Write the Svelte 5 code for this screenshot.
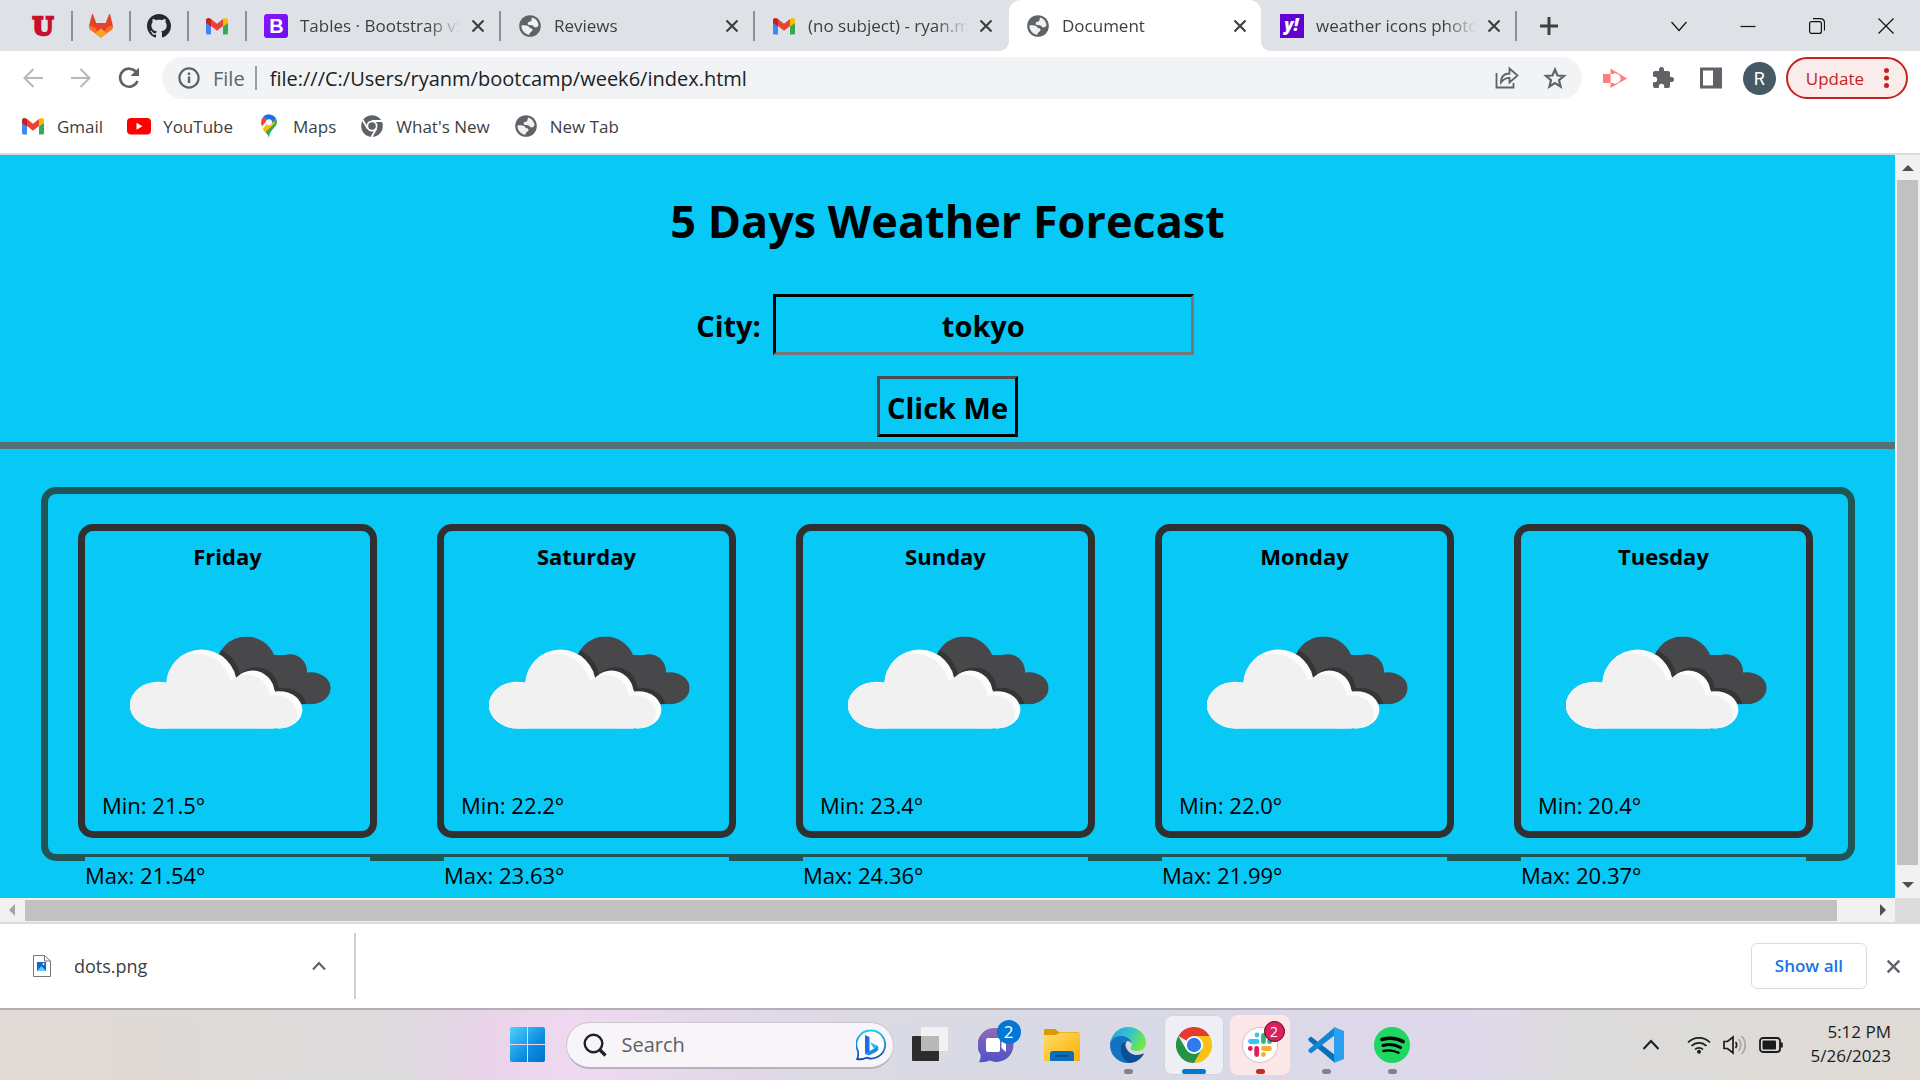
<script>
  const pinned = [
    { name: 'University of Utah', icon: 'utah' },
    { name: 'GitLab', icon: 'gitlab' },
    { name: 'GitHub', icon: 'github' },
    { name: 'Gmail', icon: 'gmail' }
  ];
  const tabs = [
    { title: 'Tables · Bootstrap v5', icon: 'bootstrap', line: true },
    { title: 'Reviews', icon: 'globe', line: true },
    { title: '(no subject) - ryan.m', icon: 'gmail', line: false },
    { title: 'Document', icon: 'globe', line: false, active: true },
    { title: 'weather icons photo', icon: 'yahoo', line: true }
  ];
  const bookmarks = [
    { title: 'Gmail', icon: 'gmail' },
    { title: 'YouTube', icon: 'youtube' },
    { title: 'Maps', icon: 'maps' },
    { title: "What's New", icon: 'chromegrey' },
    { title: 'New Tab', icon: 'globe' }
  ];
  const days = [
    { name: 'Friday', min: '21.5', max: '21.54' },
    { name: 'Saturday', min: '22.2', max: '23.63' },
    { name: 'Sunday', min: '23.4', max: '24.36' },
    { name: 'Monday', min: '22.0', max: '21.99' },
    { name: 'Tuesday', min: '20.4', max: '20.37' }
  ];
  let city = $state('tokyo');
  let url = $state('file:///C:/Users/ryanm/bootcamp/week6/index.html');
</script>

{#snippet icon(name)}
  {#if name === 'utah'}
    <svg class="i24" viewBox="0 0 24 24"><text x="12" y="20.500" text-anchor="middle" font-family="DejaVu Serif, serif" font-weight="bold" font-size="24" fill="#c8102e" stroke="#c8102e" stroke-width="2.400">U</text></svg>
  {:else if name === 'gitlab'}
    <svg class="i24" viewBox="0 0 24 24"><path fill="#e24329" d="M4 .5 7.300 9h9.400L20 .5c.3-.6.9-.5 1.100 0L24 12 12 23.500 0 12 2.900.5c.2-.5.9-.6 1.100 0z"/><path fill="#fc6d26" d="M0 12c2-.6 4.500.5 6.500 2L12 23.700 1.500 16C.3 15 0 13.500 0 12zM24 12c-2-.6-4.500.5-6.500 2L12 23.700 22.500 16c1.200-1 1.500-2.500 1.500-4z"/><path fill="#fca326" d="m6.500 19 5.500-4.500 5.500 4.500L12 23.800z"/></svg>
  {:else if name === 'github'}
    <svg class="i24" viewBox="0 0 16 16"><path fill="#24292f" d="M8 0C3.580 0 0 3.580 0 8c0 3.540 2.290 6.530 5.470 7.590.4.070.55-.17.55-.38 0-.19-.01-.82-.01-1.490-2.010.37-2.530-.49-2.690-.94-.09-.23-.48-.94-.82-1.130-.28-.15-.68-.52-.01-.53.63-.01 1.080.58 1.230.82.72 1.210 1.870.87 2.330.66.07-.52.28-.87.51-1.070-1.780-.2-3.640-.89-3.640-3.950 0-.87.31-1.590.82-2.150-.08-.2-.36-1.020.08-2.120 0 0 .67-.21 2.200.82.64-.18 1.320-.27 2-.27s1.360.09 2 .27c1.530-1.040 2.200-.82 2.200-.82.44 1.100.16 1.920.08 2.120.51.56.82 1.270.82 2.150 0 3.070-1.870 3.750-3.650 3.950.29.25.54.73.54 1.480 0 1.070-.01 1.930-.01 2.200 0 .21.15.46.55.38A8.010 8.010 0 0 0 16 8c0-4.420-3.580-8-8-8z"/></svg>
  {:else if name === 'gmail'}
    <svg class="i24" viewBox="0 0 24 24"><path fill="#4285f4" d="M1 8.500V19a1.500 1.500 0 0 0 1.500 1.500H6V11z"/><path fill="#34a853" d="M23 8.500V19a1.500 1.500 0 0 1-1.500 1.500H18V11z"/><path fill="#ea4335" d="M6 5v7l6 4.700 6-4.700V5l-6 4.700z"/><path fill="#c5221f" d="M1 6v3l5 3.500V5C4 3.400 1 3.800 1 6z"/><path fill="#fbbc04" d="M23 6v3l-5 3.500V5c2-1.600 5-1.200 5 1z"/></svg>
  {:else if name === 'bootstrap'}
    <svg class="i24" viewBox="0 0 24 24"><defs><linearGradient id="bs" x1="0" x2="1" y2="1"><stop stop-color="#9013fe"/><stop offset="1" stop-color="#6610f2"/></linearGradient></defs><rect width="24" height="24" rx="3" fill="url(#bs)"/><text x="12.500" y="19" text-anchor="middle" font-family="Liberation Sans, sans-serif" font-weight="bold" font-size="20" fill="#fff">B</text></svg>
  {:else if name === 'yahoo'}
    <svg class="i24" viewBox="0 0 24 24"><rect width="24" height="24" fill="#6001d2"/><text x="11.500" y="17" text-anchor="middle" font-family="Open Sans, sans-serif" font-weight="800" font-style="italic" font-size="17" fill="#fff">y!</text></svg>
  {:else if name === 'globe'}
    <svg class="i24" viewBox="0 0 24 24"><circle cx="12" cy="12" r="10.800" fill="#5f6368"/><path fill="#fff" fill-opacity=".9" d="M3.400 11.500c2.600-.6 5-.4 6.600.4 1.200.6 1.400 2.100 2.900 2.300 1.300.2 1.900 1 1.500 2.300-.4 1.200-2 1.400-2.500 2.500-.3.700-.5 1.200-.6 1.700C7 20.300 3.300 16.500 3.400 11.500z"/><path fill="#fff" fill-opacity=".9" d="M14 3.600c3.500.9 6.300 4 6.500 7.700-.7 1.500-1.700 2.200-3 2.200-1.600 0-1.700-1.500-3-2-1.500-.5-3.500.2-4.500-1-.8-1.100 0-2.600 1.500-2.800 1.200-.2 1.800-.3 2-1.600.1-.9.300-1.700.5-2.500z"/></svg>
  {:else if name === 'youtube'}
    <svg class="i24" viewBox="0 0 24 24"><rect y="4" width="24" height="16.500" rx="4" fill="#f00"/><path fill="#fff" d="m9.500 8.800 6 3.500-6 3.400z"/></svg>
  {:else if name === 'maps'}
    <svg class="i24" viewBox="0 0 24 24"><path fill="#34a853" d="M12 24c0-3 1-5.500 3.500-8.500S20 11 20 8.300A8 8 0 0 0 19 4.500L6.500 16c2.500 2.500 4.500 5 5.500 8z"/><path fill="#fbbc04" d="M5.700 14.900 15 4l3 5-9.500 9.200z"/><path fill="#ea4335" d="M4.200 7.500A8 8 0 0 1 6 3l4 3.300-5 6.200C4.300 11 4 9.500 4.200 7.500z"/><path fill="#1a73e8" d="M6 3a8 8 0 0 1 13 1.500L14 10 10 6.300z"/><circle cx="12" cy="8.200" r="3" fill="#fff"/></svg>
  {:else if name === 'chromegrey'}
    <svg class="i24" viewBox="0 0 24 24"><circle cx="12" cy="12" r="10.800" fill="#5f6368"/><circle cx="12" cy="12" r="5.500" fill="#fff"/><circle cx="12" cy="12" r="3.800" fill="#5f6368"/><path d="M12 7h10M7.600 14.500 2.700 6M16.400 14.500 11.500 23" stroke="#fff" stroke-width="1.800"/></svg>
  {/if}
{/snippet}

{#snippet cross(size)}
  <svg width={size} height={size} viewBox="0 0 14 14"><path d="M1.500 1.500l11 11M12.500 1.500l-11 11" stroke="currentColor" stroke-width="2.200" fill="none"/></svg>
{/snippet}

<div class="screen">
  <header class="browser">
    <div class="tabstrip">
      <nav class="pins" aria-label="Pinned tabs">
        {#each pinned as p}
          <button class="pin" aria-label={p.name}>{@render icon(p.icon)}</button><span class="line"></span>
        {/each}
      </nav>
      {#each tabs as t}
        <div class="tab" class:active={t.active}>
          {@render icon(t.icon)}
          <span class="title">{t.title}</span>
          <button class="close" aria-label="Close tab">{@render cross(14)}</button>
        </div>
        <span class="line" class:hidden={!t.line}></span>
      {/each}
      <button class="plus" aria-label="New tab"><svg width="18" height="18" viewBox="0 0 18 18"><path d="M9 0v18M0 9h18" stroke="#3c4043" stroke-width="3"/></svg></button>
      <div class="controls">
        <button aria-label="Search tabs"><svg width="16" height="16" viewBox="0 0 16 16"><path d="M.5 4 8 12.500 15.500 4"/></svg></button>
        <button aria-label="Minimize"><svg width="16" height="16" viewBox="0 0 16 16"><path d="M.5 8.500h15"/></svg></button>
        <button aria-label="Restore"><svg width="16" height="16" viewBox="0 0 16 16"><rect x=".6" y="3.600" width="11.800" height="11.800" rx="2"/><path d="M4 .6h7.500a4 4 0 0 1 4 4v8"/></svg></button>
        <button aria-label="Close window"><svg width="16" height="16" viewBox="0 0 16 16"><path d="M.5.5l15 15M15.500.5l-15 15"/></svg></button>
      </div>
    </div>

    <div class="toolbar">
      <button class="nav dim" aria-label="Back"><svg width="20" height="20" viewBox="0 0 20 20"><path d="M20 10H1.500M10.500 1l-9 9 9 9"/></svg></button>
      <button class="nav dim" aria-label="Forward"><svg width="20" height="20" viewBox="0 0 20 20"><path d="M0 10h18.500M9.500 1l9 9-9 9"/></svg></button>
      <button class="nav" aria-label="Reload"><svg width="22" height="22" viewBox="0 0 22 22"><path stroke-width="2.600" d="M19.500 14a9 9 0 1 1-1-8.500"/><path d="M21 .5V9h-8.500z" fill="#5f6368" stroke="none"/></svg></button>
      <div class="omnibox">
        <svg width="22" height="22" viewBox="0 0 22 22"><circle cx="11" cy="11" r="9.600" fill="none" stroke="#5f6368" stroke-width="2.200"/><path d="M11 9.500V16M11 5.500V8" stroke="#5f6368" stroke-width="2.400"/></svg>
        <span class="scheme">File</span>
        <span class="divide"></span>
        <input class="url" aria-label="Address" bind:value={url} spellcheck="false" />
        <button class="nav" aria-label="Share"><svg width="24" height="24" viewBox="0 0 24 24"><path stroke-width="1.800" d="M1.500 7v14.500h17V17M6 16.500C6 10 9 7.500 14.500 7.500V2.500l8 7-8 7v-4.700C10.500 11.800 8.500 13 6 16.500z"/></svg></button>
        <button class="nav" aria-label="Bookmark"><svg width="24" height="24" viewBox="0 0 24 24"><path stroke-width="2.200" d="m12 3.500 2.500 6 6.500.5-5 4.200 1.600 6.300L12 17l-5.600 3.500L8 14.200 3 10l6.500-.5z"/></svg></button>
      </div>
      <div class="extensions">
        <button class="nav" aria-label="Screen recorder"><svg width="24" height="24" viewBox="0 0 24 24"><path fill="#ff7d7d" stroke="none" d="M0 8h7.500v9H0zM7.500 2.500 24 12.500 7.500 22v-5h3l1 1 4-1.500 2-2.500v-3l-2-2.500-4-1.500-1 1h-3z"/><path fill="#fff" stroke="none" d="M9 9.500 13.500 8v2h3v5h-3v2L9 15.500z"/></svg></button>
        <button class="nav" aria-label="Extensions"><svg width="24" height="24" viewBox="0 0 24 24"><path fill="#5f6368" stroke="none" d="M20.500 11H19V7a2 2 0 0 0-2-2h-4V3.500a2.500 2.500 0 0 0-5 0V5H4a2 2 0 0 0-2 2v3.800h1.500a2.700 2.700 0 0 1 0 5.400H2V20a2 2 0 0 0 2 2h3.800v-1.500a2.700 2.700 0 0 1 5.400 0V22H17a2 2 0 0 0 2-2v-4h1.500a2.500 2.500 0 0 0 0-5z"/></svg></button>
        <button class="nav" aria-label="Side panel"><svg width="24" height="24" viewBox="0 0 24 24"><path fill="#5f6368" stroke="none" fill-rule="evenodd" d="M1 1.500h22v21H1zM4 4.500v15h10v-15z"/></svg></button>
        <button class="avatar" aria-label="Profile">R</button>
      </div>
      <button class="update">Update<svg width="5" height="20" viewBox="0 0 5 20"><circle cx="2.500" cy="2.500" r="2.500"/><circle cx="2.500" cy="10" r="2.500"/><circle cx="2.500" cy="17.500" r="2.500"/></svg></button>
    </div>

    <nav class="bookmarks" aria-label="Bookmarks">
      {#each bookmarks as b}
        <a href="#top">{@render icon(b.icon)}{b.title}</a>
      {/each}
    </nav>
  </header>

  <div class="viewport">
    <main class="page">
      <h1>5 Days Weather Forecast</h1>
      <form onsubmit={(e) => e.preventDefault()}>
        <div class="field">
          <label for="city">City:</label>
          <input id="city" bind:value={city} />
        </div>
        <button class="go">Click Me</button>
      </form>
      <hr />
      <section class="forecast">
        {#each days as d}
          <div class="day">
            <article class="card">
              <h2>{d.name}</h2>
              <svg class="cloud" viewBox="282 496 622 284" role="img" aria-label="Broken clouds">
                <defs>
                  <g id="front"><circle cx="515" cy="645" r="106"/><ellipse cx="385" cy="706" rx="85" ry="70"/><circle cx="668" cy="668" r="66"/><ellipse cx="748" cy="720" rx="70" ry="56"/><path d="M385 660h350v116H385z"/></g>
                  <clipPath id="frontclip"><circle cx="515" cy="645" r="106"/><ellipse cx="385" cy="706" rx="85" ry="70"/><circle cx="668" cy="668" r="66"/><ellipse cx="748" cy="720" rx="70" ry="56"/><path d="M385 660h350v116H385z"/></clipPath>
                  <clipPath id="backclip"><circle cx="650" cy="590" r="90"/><circle cx="780" cy="605" r="52"/><ellipse cx="843" cy="655" rx="60" ry="48"/><path d="M600 600 700 555h80l60 60v88h-30z"/></clipPath>
                </defs>
                <g clip-path="url(#backclip)"><path fill="#48484a" d="M500 490h410v230H500z"/><use href="#front" x="12" y="-10" fill="#343537"/></g>
                <use href="#front" fill="#fcfcfd"/>
                <g clip-path="url(#frontclip)"><use href="#front" x="-16" y="12" fill="#f1f1f2"/><path d="M300 640h120v140H300zM385 740h370v40H385z" fill="#f1f1f2"/></g>
              </svg>
              <p>Min: {d.min}°</p>
            </article>
            <p class="max">Max: {d.max}°</p>
          </div>
        {/each}
      </section>
    </main>
    <div class="vbar"><svg width="12" height="6" viewBox="0 0 12 6"><path d="M6 0l6 6H0z" fill="#505050"/></svg><span></span><svg width="12" height="6" viewBox="0 0 12 6"><path d="M6 6l6-6H0z" fill="#505050"/></svg></div>
    <div class="hbar"><svg width="6" height="12" viewBox="0 0 6 12"><path d="M0 6l6-6v12z" fill="#a3a3a3"/></svg><span></span><svg width="6" height="12" viewBox="0 0 6 12"><path d="M6 6 0 0v12z" fill="#505050"/></svg></div>
    <div class="corner"></div>
  </div>

  <footer class="downloads">
    <button class="file">
      <svg width="18" height="22" viewBox="0 0 18 22"><path d="M.5.5h11l6 5.500v15.500H.5z" fill="#fff" stroke="#777"/><path d="M11.500.5V6h6" fill="none" stroke="#777"/><rect x="4" y="7" width="9" height="9" fill="#1565c9"/><path d="m4 16 4.500-5 4.500 5z" fill="#50d0f8"/><circle cx="10.500" cy="9" r="1" fill="#fff"/></svg>
      <span>dots.png</span>
      <svg width="14" height="10" viewBox="0 0 14 10"><path d="m1 8.500 6-6.500 6 6.500" fill="none" stroke="#5f6368" stroke-width="2.200"/></svg>
    </button>
    <button class="showall">Show all</button>
    <button class="shut" aria-label="Close downloads">{@render cross(15)}</button>
  </footer>

  <div class="taskbar">
    <div class="apps">
      <button class="win" aria-label="Start"><svg width="36" height="36" viewBox="0 0 36 36"><defs><linearGradient id="wn" x1="0" y1="0" x2="1" y2="1"><stop stop-color="#4fd0ff"/><stop offset=".6" stop-color="#0c8ee0"/><stop offset="1" stop-color="#0070cf"/></linearGradient></defs><path fill="url(#wn)" d="M2 0h15v17H0V2a2 2 0 0 1 2-2zM18 0h15a2 2 0 0 1 2 2v15H18zM0 18h17v17H2a2 2 0 0 1-2-2zM18 18h17v15a2 2 0 0 1-2 2H18z"/></svg></button>
      <label class="search">
        <svg width="24" height="24" viewBox="0 0 24 24"><circle cx="10.500" cy="10.500" r="8.800" fill="none" stroke="#222" stroke-width="2.400"/><path d="m17 17 5.500 5.500" stroke="#222" stroke-width="3.200"/></svg>
        <input type="text" aria-label="Search" placeholder="Search" />
        <svg width="30" height="32" viewBox="0 0 30 32"><defs><linearGradient id="bg" x2="0" y2="1"><stop stop-color="#1ccdf0"/><stop offset="1" stop-color="#1546b8"/></linearGradient></defs><path d="M15 1.500a14 14 0 1 1-4.500 27.200C8 30 4 30.500 1.200 30 2.300 28 2.500 26 2 22A14 14 0 0 1 15 1.500z" fill="#fff" stroke="url(#bg)" stroke-width="1.800"/><path fill="#1d6fe8" d="m9 6 4.500 2v14.500L9 25z"/><path fill="#22c4ee" d="m14 13 8 4v4.500L17 18.500z"/><path fill="#2286ee" d="m9 25 13-8c1 3 0 5-2 6l-7 3.500z"/></svg>
      </label>
      <button class="app" aria-label="Task view"><svg width="36" height="36" viewBox="0 0 36 36"><rect y="9" width="27" height="25" rx="1" fill="#2c2c2c"/><rect x="9" width="27" height="24" rx="1" fill="#f4f4f4" opacity=".9"/><rect x="9" y="9" width="18" height="15" fill="#b9b9b9"/></svg></button>
      <button class="app" aria-label="Chat">
        <svg width="36" height="36" viewBox="0 0 36 36"><defs><linearGradient id="ch" x2="0" y2="1"><stop stop-color="#8f6bb5"/><stop offset="1" stop-color="#4f52c8"/></linearGradient></defs><path fill="url(#ch)" d="M18 1a17 17 0 1 1-6.500 32.500C8 35 4 35.500 1 35c1-2 2-5 1.500-7.500A17 17 0 0 1 18 1z"/><rect x="8" y="11" width="14" height="14" rx="2" fill="#fff"/><path fill="#fff" d="m23.500 15 4.500-4v14l-4.500-4z"/></svg>
        <span class="badge">2</span>
      </button>
      <button class="app" aria-label="File Explorer"><svg width="36" height="36" viewBox="0 0 36 36"><defs><linearGradient id="fd" x2="1" y2="1"><stop stop-color="#ffdc6a"/><stop offset="1" stop-color="#f8b000"/></linearGradient></defs><path fill="#d99a07" d="M0 3.500A1.500 1.500 0 0 1 1.500 2H11l4 3h20v8H0z"/><path fill="url(#fd)" d="M0 8h12l4-2.500h18.500A1.500 1.500 0 0 1 36 7v27H0z"/><path fill="#0d6dbd" d="M6 34V27a3 3 0 0 1 3-3h18a3 3 0 0 1 3 3v7z"/><path d="M11 29h14" stroke="#084a85" stroke-width="1.500"/></svg></button>
      <button class="app" aria-label="Edge"><svg width="36" height="36" viewBox="0 0 36 36"><defs><linearGradient id="eg" x2="1" y2=".4"><stop stop-color="#1f9fe0"/><stop offset=".55" stop-color="#31c3cf"/><stop offset="1" stop-color="#6ee84a"/></linearGradient></defs><path fill="url(#eg)" d="M0 17C1 7 9 0 18 0c10 0 18 7 18 15.500 0 6-4.500 8.500-9 8.500-4 0-6.500-1.200-6.500-2.800 0-.8 1.500-1.700 1.500-4.200 0-4-5-6-10-6-6 0-10 3-12 6z"/><path fill="#1273c4" d="M0 18c0-5 5-9 10.500-9 5 0 11 2.500 11.500 8-1-2-3-3-5-3-5 0-7 5-6 10s5 10 10 12C9 37 0 29 0 18z"/><path fill="#0c4f96" d="M10.500 21c0-4 3-7 6.500-7-2 2-2 5-.5 7.500 2 4 6 6.500 10.500 6.500 3 0 5-1 6-1.500.5-.2 1 .3.700.8C31 32 26 36 19.500 36c-5-1.500-9-8-9-15z"/></svg><i class="run"></i></button>
      <button class="app on" aria-label="Chrome"><svg width="36" height="36" viewBox="0 0 36 36"><path fill="#e33b2e" d="M18 18 2.400 9a18 18 0 0 1 31.200 0z"/><path fill="#fbc116" d="M18 18V9h15.600A18 18 0 0 1 18 36l7.800-13.500z"/><path fill="#259245" d="M18 18 25.800 22.500 18 36A18 18 0 0 1 2.400 9l7.800 13.500z"/><circle cx="18" cy="18" r="9" fill="#fff"/><circle cx="18" cy="18" r="7.200" fill="#2f7bee"/></svg><i class="run wide"></i></button>
      <button class="app alert" aria-label="Slack"><svg width="36" height="36" viewBox="0 0 36 36"><circle cx="18" cy="18" r="17.500" fill="#fff" stroke="#c9c3c6"/><g stroke-width="4.800" stroke-linecap="round"><path d="M15 8v.1M8.500 14.500H15" stroke="#36c5f0"/><path d="M21.500 8.500v6M27.500 14.500h.1" stroke="#2eb67d"/><path d="M21.500 21.500h6M21.500 27.500v.1" stroke="#ecb22e"/><path d="M14.700 21.500v6M8.300 21.500v.1" stroke="#e01e5a"/></g></svg><span class="badge red">2</span><i class="run hot"></i></button>
      <button class="app" aria-label="Visual Studio Code"><svg width="36" height="36" viewBox="0 0 36 36"><path fill="#0a6fba" d="m0 12 3-2.500 24 18.500V36L1 14z"/><path fill="#1286d2" d="m0 24 3 2.500L27 8V0L1 22z"/><path fill="#2a9fee" d="m26 0 10 4v28l-10 4z"/></svg><i class="run"></i></button>
      <button class="app" aria-label="Spotify"><svg width="36" height="36" viewBox="0 0 36 36"><circle cx="18" cy="18" r="18" fill="#1ed760"/><path fill="none" stroke="#000" stroke-linecap="round" stroke-width="3.600" d="M8 12.500c7-2 15-1.500 21 2"/><path fill="none" stroke="#000" stroke-linecap="round" stroke-width="3" d="M9 18.500c6-1.600 12-1 17.500 2"/><path fill="none" stroke="#000" stroke-linecap="round" stroke-width="2.400" d="M9.500 24c5-1.200 10-.7 15 1.800"/></svg><i class="run"></i></button>
    </div>
    <div class="tray">
      <svg width="18" height="12" viewBox="0 0 18 12"><path d="m1.500 10 7.500-8 7.500 8" stroke-width="2"/></svg>
      <div class="status">
        <svg width="24" height="18" viewBox="0 0 24 18"><path stroke-width="1.700" d="M1 6.500a15.500 15.500 0 0 1 22 0M4.500 10a10.600 10.600 0 0 1 15 0M8 13.500a5.700 5.700 0 0 1 8 0"/><circle cx="12" cy="15.800" r="2" fill="#1c1c1c" stroke="none"/></svg>
        <svg width="24" height="20" viewBox="0 0 24 20"><path stroke-width="1.700" d="M1 6.500v7h3.500L10 18V2L4.500 6.500zM12.500 7c1.500 1.500 1.500 4.500 0 6"/><path stroke="#a9a6a6" stroke-width="1.700" d="M15.500 4c3 3.500 3 8.500 0 12M18.500 1c5 5 5 13 0 18"/></svg>
        <svg width="24" height="16" viewBox="0 0 24 16"><rect x="1" y="1" width="20" height="14" rx="3" stroke-width="1.800"/><rect x="3.500" y="3.500" width="13.500" height="9" rx="1" fill="#1c1c1c" stroke="none"/><path d="M22.500 5.500v5" stroke-width="2.500"/></svg>
      </div>
      <div class="clock"><time>5:12 PM</time><time>5/26/2023</time></div>
    </div>
  </div>
</div>

<style>
  :global(body) { margin: 0; }
  .screen {
    height: 100vh;
    display: flex;
    flex-direction: column;
    overflow: hidden;
    font-family: 'Open Sans', 'Noto Sans', sans-serif;
    font-size: 17px;
    color: #3c4043;
    background: #fff;
  }
  .screen :is(button, input) {
    font: inherit;
    color: inherit;
    background: none;
    border: 0;
    padding: 0;
    margin: 0;
    min-width: 0;
    outline: 0;
  }
  .screen button { display: flex; align-items: center; justify-content: center; flex: none; }
  svg { display: block; flex: none; }
  .i24 { width: 24px; height: 24px; overflow: visible; }

  .browser { border-bottom: 2px solid #d9dbdd; }
  .tabstrip { display: flex; align-items: center; height: 51px; padding-left: 15px; background: #dee1e6; }
  .pins { display: flex; align-items: center; }
  .pins .pin { width: 56px; height: 30px; }
  .line { width: 2px; height: 30px; background: #8d9196; flex: none; }
  .line.hidden { background: transparent; }
  .tab {
    position: relative;
    flex: 0 1 252px;
    min-width: 0;
    height: 51px;
    box-sizing: border-box;
    padding: 0 13px 0 17px;
    display: flex;
    align-items: center;
  }
  .tab .title {
    flex: 1;
    min-width: 0;
    margin: 0 10px 0 12px;
    overflow: hidden;
    white-space: nowrap;
    mask-image: linear-gradient(to right, #000 calc(100% - 32px), transparent);
  }
  .tab.active { background: #fff; border-radius: 12px 12px 0 0; }
  .tab.active::before, .tab.active::after {
    content: '';
    position: absolute;
    bottom: 0;
    width: 10px;
    height: 10px;
  }
  .tab.active::before { right: 100%; background: radial-gradient(circle at 0 0, transparent 10px, #fff 10px); }
  .tab.active::after { left: 100%; background: radial-gradient(circle at 100% 0, transparent 10px, #fff 10px); }
  .tab .close { width: 16px; height: 24px; }
  .screen .plus { width: 34px; height: 34px; margin-left: 15px; }
  .controls { margin-left: auto; display: flex; height: 44px; }
  .controls button { width: 69px; height: 44px; }
  .controls svg { fill: none; stroke: #111; stroke-width: 1.2; }

  .toolbar { display: flex; align-items: center; height: 54px; padding: 0 12px 0 9px; }
  .nav { width: 48px; height: 42px; }
  .nav svg { fill: none; stroke: #5f6368; stroke-width: 2; }
  .nav.dim svg { stroke: #b5b7ba; }
  .omnibox {
    flex: 1;
    display: flex;
    align-items: center;
    height: 42px;
    margin-left: 9px;
    padding: 0 3px 0 16px;
    border-radius: 21px;
    background: #f1f3f4;
    font-size: 20px;
  }
  .scheme { margin-left: 13px; color: #5f6368; }
  .divide { width: 2px; height: 24px; margin: 0 13px 0 10px; background: #9a9da1; }
  .url { flex: 1; }
  .screen .url { color: #202124; }
  .extensions { display: flex; align-items: center; padding: 0 10px 0 9px; }
  .screen .avatar { width: 33px; height: 33px; margin-left: 8px; border-radius: 50%; background: #455a64; color: #fff; font: 18px Roboto, sans-serif; }
  .screen .update {
    height: 42px;
    gap: 20px;
    padding: 0 17px 0 18px;
    border: 2px solid #c5221f;
    border-radius: 21px;
    background: #f9eceb;
    color: #c5221f;
  }
  .update svg { fill: #c5221f; }

  .bookmarks { display: flex; gap: 24px; height: 42px; padding: 0 21px 6px; align-items: center; }
  .bookmarks a { display: flex; align-items: center; gap: 12px; color: inherit; text-decoration: none; }

  .viewport { flex: 1; min-height: 0; display: grid; grid-template-columns: minmax(0, 1fr) 25px; grid-template-rows: minmax(0, 1fr) 26px; }
  .page { background: #08c8f6; color: #000; overflow: hidden; }
  h1 { margin: 34px 0 41px; font-size: 45px; line-height: 64px; text-align: center; font-weight: 700; }
  form { display: flex; flex-direction: column; align-items: center; gap: 21px; font-size: 29px; font-weight: 700; }
  .field { display: flex; align-items: center; justify-content: center; gap: 12px; width: 100%; box-sizing: border-box; padding-right: 5px; }
  .field label { padding-top: 2px; }
  .screen .field input { width: 421px; height: 61px; box-sizing: border-box; padding-top: 2px; text-align: center; border: 3px inset #767676; border-color: #212121 #767676 #767676 #212121; }
  .screen .go { height: 61px; padding: 2px 7px 0; border: 3px solid; border-color: #4d4d4d #000 #000 #4d4d4d; }
  hr { height: 7px; margin: 5px 0 38px; border: 0; background: #567176; }
  .forecast {
    display: grid;
    grid-template-columns: repeat(5, minmax(0, 1fr));
    gap: 60px;
    margin: 0 40px 0 41px;
    padding: 30px 35px 0 30px;
    border: 7px solid #205555;
    border-radius: 15px;
    font-size: 22px;
    line-height: 36px;
  }
  .card {
    box-sizing: border-box;
    height: 314px;
    display: flex;
    flex-direction: column;
    padding: 7px 17px 8px;
    border: 7px solid #303030;
    border-radius: 15px;
  }
  .card h2, .card p { margin: 0; font-size: 22px; line-height: 36px; }
  .card h2 { text-align: center; }
  .card p { margin-top: auto; }
  .cloud { width: 207px; height: 95px; margin: 61px auto 0; }
  .max { height: 60px; margin: 19px 7px -63px; background: #08c8f6; }

  .vbar, .hbar { background: #f1f1f1; display: flex; align-items: center; }
  .vbar { flex-direction: column; padding: 10px 0; }
  .vbar span { flex: 1; width: 21px; margin: 9px 0 17px; background: #c1c1c1; }
  .hbar { padding: 0 9px; border-bottom: 2px solid #dcdcdc; }
  .hbar span { flex: 1; height: 21px; margin: 0 43px 0 10px; background: #c1c1c1; }
  .corner { background: #dcdcdc; }

  .downloads { height: 84px; display: flex; align-items: center; padding-right: 19px; border-bottom: 2px solid #b3afb3; }
  .screen .file { width: 356px; height: 66px; box-sizing: border-box; padding: 0 28px 0 33px; border-right: 2px solid #d0d1d3; font-size: 18px; }
  .file span { flex: 1; margin-left: 23px; text-align: left; }
  .screen .showall { height: 46px; padding: 0 23px 2px; margin-left: auto; border: 1px solid #dadce0; border-radius: 6px; color: #1a73e8; font-weight: 600; }
  .screen .shut { margin-left: 19px; color: #5f6368; }

  .taskbar {
    height: 70px;
    display: grid;
    grid-template-columns: 1fr auto 1fr;
    align-items: center;
    color: #1c1c1c;
    background: linear-gradient(to right, #e2d9d6, #dedad7 11%, #dddade 21%, #e8d3e9 25%, #eed9f0 30%, #e2d8e8 38%, #dadae4 46%, #d8d9e6 60%, #dfd8eb 76%, #dedae6 79%, #dcdbdc 82%, #dedbd8 90%, #dfdad6);
  }
  .apps { grid-column: 2; display: flex; align-items: center; gap: 6px; padding-left: 10px; }
  .screen .win { width: 38px; height: 60px; margin-right: 13px; }
  .search {
    box-sizing: border-box;
    width: 328px;
    height: 47px;
    display: flex;
    align-items: center;
    padding: 0 7px 0 16px;
    border: 1px solid #cfc6d3;
    border-bottom: 2px solid #b9b2bd;
    border-radius: 24px;
    background: #f8f5fa;
    font-size: 20px;
  }
  .search input { flex: 1; }
  .screen .search input { margin-left: 15px; }
  .search input::placeholder { color: #605e62; opacity: 1; }
  .app { position: relative; width: 60px; height: 60px; border-radius: 8px; }
  .app.on { box-shadow: inset 0 0 0 1px #d3d3dc; }
  .screen .app.on { background: #eeeff5; }
  .screen .app.alert { background: #fce6e8; }
  .badge {
    position: absolute;
    top: 5px;
    right: 5px;
    width: 24px;
    height: 24px;
    border-radius: 50%;
    background: #0078d4;
    color: #fff;
    font-size: 17px;
    line-height: 24px;
  }
  .badge.red { box-sizing: border-box; width: 21px; height: 21px; border: 1px solid #3d0a1c; background: #e01e5a; font-size: 14px; line-height: 19px; top: 6px; }
  .run { position: absolute; bottom: 1px; left: 50%; width: 9px; height: 5px; margin-left: -4px; border-radius: 3px; background: #828388; }
  .run.wide { width: 24px; margin-left: -12px; background: #0078d4; }
  .run.hot { background: #c42b1c; }
  .tray { grid-column: 3; justify-self: end; display: flex; align-items: center; padding-right: 29px; }
  .tray svg { fill: none; stroke: #1c1c1c; }
  .status { display: flex; align-items: center; gap: 12px; margin: 0 27px; }
  .clock { display: flex; flex-direction: column; padding-bottom: 2px; text-align: right; font-size: 17px; line-height: 24px; }
</style>
